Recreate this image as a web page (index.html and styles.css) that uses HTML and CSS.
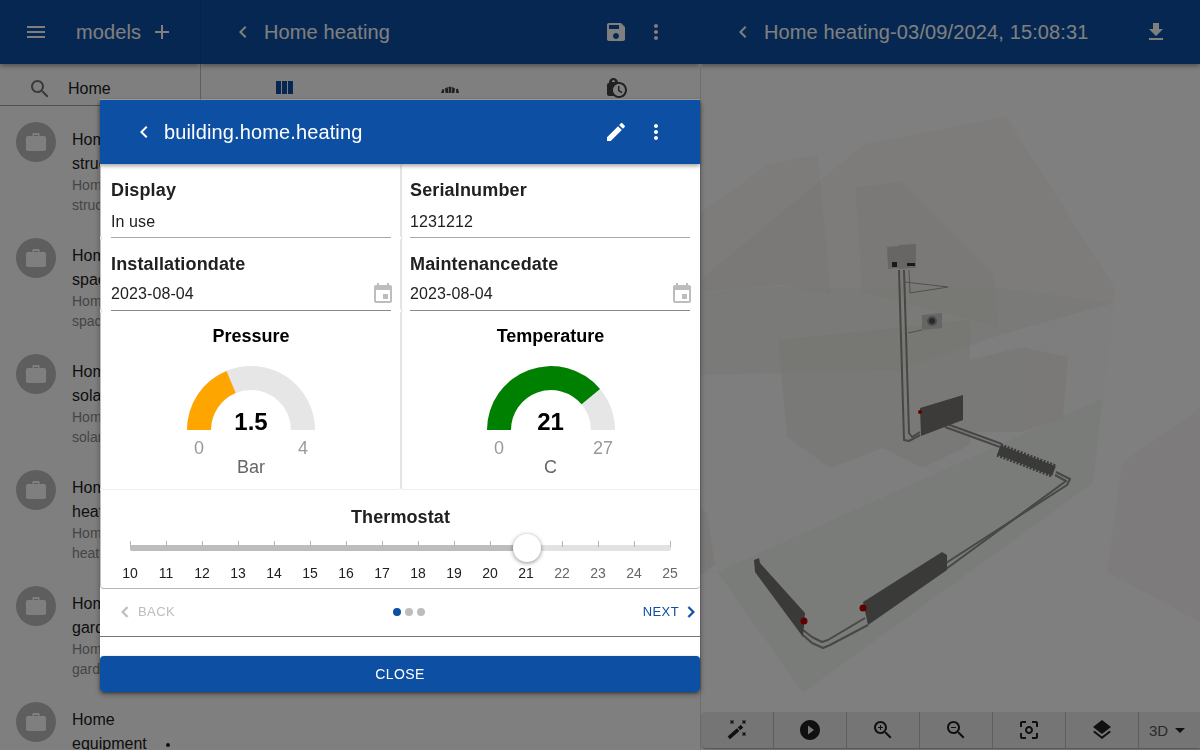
FILE: index.html
```html
<!DOCTYPE html>
<html lang="en">

<head>
    <meta charset="UTF-8">
    <meta name="viewport" content="width=device-width, initial-scale=1.0">
    <title>Home heating</title>
    <link rel="stylesheet" href="styles.css">
</head>

<body>
    <div class="app">
        <!-- models list -->
        <section class="panel panel-left">
            <header class="topbar">
                <svg class="icon" viewBox="0 0 24 24"><path d="M3 18h18v-2H3v2zm0-5h18v-2H3v2zm0-7v2h18V6H3z"/></svg>
                <span class="topbar-title models-title">models</span>
                <svg class="icon" viewBox="0 0 24 24"><path d="M19 13h-6v6h-2v-6H5v-2h6V5h2v6h6v2z"/></svg>
            </header>
            <div class="search">
                <svg class="icon icon-search" viewBox="0 0 24 24"><path d="M15.5 14h-.79l-.28-.27C15.41 12.59 16 11.11 16 9.5 16 5.91 13.09 3 9.5 3S3 5.91 3 9.5 5.91 16 9.5 16c1.61 0 3.09-.59 4.23-1.57l.27.28v.79l5 4.99L20.49 19l-4.99-5zm-6 0C7.01 14 5 11.99 5 9.5S7.01 5 9.5 5 14 7.01 14 9.5 11.99 14 9.5 14z"/></svg>
                <span>Home</span>
            </div>
            <ul class="list">
                <li class="item">
                    <span class="avatar"><svg class="icon" viewBox="0 0 24 24"><path fill-rule="evenodd" d="M4 6h4.500V4c0-.6.4-1 1-1h5c.6 0 1 .4 1 1v2H20c1.100 0 2 .9 2 2v11c0 1.100-.9 2-2 2H4c-1.100 0-2-.9-2-2V8c0-1.100.9-2 2-2zm6 0h4V5h-4z"/></svg></span>
                    <div class="item-text"><div class="item-title">Home structure</div><div class="item-sub">Home structure</div></div>
                </li>
                <li class="item">
                    <span class="avatar"><svg class="icon" viewBox="0 0 24 24"><path fill-rule="evenodd" d="M4 6h4.500V4c0-.6.4-1 1-1h5c.6 0 1 .4 1 1v2H20c1.100 0 2 .9 2 2v11c0 1.100-.9 2-2 2H4c-1.100 0-2-.9-2-2V8c0-1.100.9-2 2-2zm6 0h4V5h-4z"/></svg></span>
                    <div class="item-text"><div class="item-title">Home spaces</div><div class="item-sub">Home spaces</div></div>
                </li>
                <li class="item">
                    <span class="avatar"><svg class="icon" viewBox="0 0 24 24"><path fill-rule="evenodd" d="M4 6h4.500V4c0-.6.4-1 1-1h5c.6 0 1 .4 1 1v2H20c1.100 0 2 .9 2 2v11c0 1.100-.9 2-2 2H4c-1.100 0-2-.9-2-2V8c0-1.100.9-2 2-2zm6 0h4V5h-4z"/></svg></span>
                    <div class="item-text"><div class="item-title">Home solar</div><div class="item-sub">Home solar</div></div>
                </li>
                <li class="item">
                    <span class="avatar"><svg class="icon" viewBox="0 0 24 24"><path fill-rule="evenodd" d="M4 6h4.500V4c0-.6.4-1 1-1h5c.6 0 1 .4 1 1v2H20c1.100 0 2 .9 2 2v11c0 1.100-.9 2-2 2H4c-1.100 0-2-.9-2-2V8c0-1.100.9-2 2-2zm6 0h4V5h-4z"/></svg></span>
                    <div class="item-text"><div class="item-title">Home heating</div><div class="item-sub">Home heating</div></div>
                </li>
                <li class="item">
                    <span class="avatar"><svg class="icon" viewBox="0 0 24 24"><path fill-rule="evenodd" d="M4 6h4.500V4c0-.6.4-1 1-1h5c.6 0 1 .4 1 1v2H20c1.100 0 2 .9 2 2v11c0 1.100-.9 2-2 2H4c-1.100 0-2-.9-2-2V8c0-1.100.9-2 2-2zm6 0h4V5h-4z"/></svg></span>
                    <div class="item-text"><div class="item-title">Home garden</div><div class="item-sub">Home garden</div></div>
                </li>
                <li class="item">
                    <span class="avatar"><svg class="icon" viewBox="0 0 24 24"><path fill-rule="evenodd" d="M4 6h4.500V4c0-.6.4-1 1-1h5c.6 0 1 .4 1 1v2H20c1.100 0 2 .9 2 2v11c0 1.100-.9 2-2 2H4c-1.100 0-2-.9-2-2V8c0-1.100.9-2 2-2zm6 0h4V5h-4z"/></svg></span>
                    <div class="item-text"><div class="item-title">Home equipment</div></div>
                    <span class="item-dot"></span>
                </li>
            </ul>
        </section>

        <!-- model detail -->
        <section class="panel panel-mid">
            <header class="topbar">
                <svg class="icon" viewBox="0 0 24 24"><path d="M15.41 7.41L14 6l-6 6 6 6 1.41-1.41L10.83 12z"/></svg>
                <span class="topbar-title">Home heating</span>
                <span class="spacer"></span>
                <svg class="icon" viewBox="0 0 24 24"><path d="M17 3H5c-1.11 0-2 .9-2 2v14c0 1.100.89 2 2 2h14c1.100 0 2-.9 2-2V7l-4-4zm-5 16c-1.660 0-3-1.340-3-3s1.340-3 3-3 3 1.340 3 3-1.340 3-3 3zm3-10H5V5h10v4z"/></svg>
                <svg class="icon icon-more" viewBox="0 0 24 24"><path d="M12 8c1.100 0 2-.9 2-2s-.9-2-2-2-2 .9-2 2 .9 2 2 2zm0 2c-1.100 0-2 .9-2 2s.9 2 2 2 2-.9 2-2-.9-2-2-2zm0 6c-1.100 0-2 .9-2 2s.9 2 2 2 2-.9 2-2-.9-2-2-2z"/></svg>
            </header>
            <div class="tabs">
                <svg class="icon tab-active" viewBox="0 0 24 24"><path d="M10 18h5V5h-5v13zm-6 0h5V5H4v13zM16 5v13h5V5h-5z"/></svg>
                <svg class="icon tab-icon" viewBox="0 0 24 24"><path d="M3 17l1.500-4 2 .8-.7 3.200zM7 12.500l2.600-1.400 1 5.900H7.600zM10.400 10.700h3.200l-.8 6.300h-1.600zM14.400 11.100l2.600 1.400-.6 4.500h-3zM18 13l2-.2 1 4.200h-2.800z"/></svg>
                <svg class="icon tab-icon" viewBox="0 0 24 24"><path d="M14.500 14.200l2.900 1.700-.8 1.300L13 15v-5h1.500v4.200zM22 14c0 4.410-3.590 8-8 8-2.020 0-3.860-.76-5.270-2H4c-1.150 0-2-.85-2-2V9c0-1.120.89-1.960 2-2v-.5C4 4.010 6.010 2 8.500 2c2.340 0 4.240 1.790 4.460 4.080.34-.05.69-.08 1.040-.08 4.410 0 8 3.590 8 8zM7 6h3v-.5C10 4.740 9.250 4 8.500 4 7.750 4 7 4.740 7 5.500V6zm13 8c0-3.310-2.690-6-6-6s-6 2.690-6 6 2.690 6 6 6 6-2.690 6-6z"/></svg>
            </div>
        </section>

        <!-- 3D viewer -->
        <section class="panel panel-right">
            <header class="topbar">
                <svg class="icon" viewBox="0 0 24 24"><path d="M15.41 7.41L14 6l-6 6 6 6 1.41-1.41L10.83 12z"/></svg>
                <span class="topbar-title">Home heating-03/09/2024, 15:08:31</span>
                <span class="spacer"></span>
                <svg class="icon" viewBox="0 0 24 24"><path d="M19 9h-4V3H9v6H5l7 7 7-7zM5 18v2h14v-2H5z"/></svg>
            </header>
            <div class="viewer">
                <svg class="scene" viewBox="700 64 500 686">
                    <g class="walls">
                        <polygon points="700,213 768,164 783,285 700,292"/>
                        <polygon points="768,164 818,154 831,295 783,285"/>
                        <polygon points="700,280 864,144 1006,116 1116,290 1113,303 1000,335 900,370 700,375"/>
                        <polygon points="855,187 901,182 994,275 998,327 862,292"/>
                    </g>
                    <g class="floor">
                        <polygon class="floor-back" points="700,293 767,287 993,287 1115,303 1103,398 717,572 700,575"/>
                        <polygon points="717,572 1103,398 1093,483 803,693"/>
                    </g>
                    <g class="boxes">
                        <polygon points="778,340 970,320 970,445 923,468 883,448 830,468 787,437"/>
                        <polygon points="970,360 1022,347 1022,432 970,432"/>
                    </g>
                    <g class="pink">
                        <polygon points="1022,347 1068,357 1063,418 1022,432"/>
                        <polygon points="1200,408 1122,463 1107,572 1200,622"/>
                        <polygon points="700,508 707,512 715,565 700,575"/>
                    </g>
                    <g class="pipes">
                        <polyline points="899,270 904,440 909,441 920,435"/>
                        <polyline points="904,270 909,433 912,437 920,432"/>
                        <polyline class="pipe-thin" points="909,270 910,293 948,287 905,282"/>
                        <polyline class="pipe-thin" points="908,333 922,330"/>
                        <polyline points="945,427 1000,447"/>
                        <polyline points="947,424 1002,444"/>
                        <polyline points="1056,472 1070,479 1067,485 946,563"/>
                        <polyline points="1055,475 1066,481 946,569"/>
                        <polyline points="803,630 812,637 822,642 828,640 865,618"/>
                        <polyline points="803,635 812,643 823,648 830,645 868,625"/>
                    </g>
                    <polygon class="unit" points="887,247 899,246 899,268 888,269"/>
                    <polygon class="unit" points="899,245 916,244 916,268 899,269"/>
                    <rect class="unit-dark" x="907" y="263" width="8" height="3"/>
                    <rect class="unit-dark" x="892" y="262" width="5" height="5"/>
                    <polygon class="unit" points="922,315 942,313 942,328 922,330"/>
                    <circle class="fan" cx="932" cy="321" r="4"/>
                    <polygon class="radiator-light" points="920,408 963,395 963,420 921,436"/>
                    <polygon class="radiator" points="754,560 759,558 760,563 805,613 803,637 755,572"/>
                    <polygon class="radiator" points="863,602 942,552 947,555 947,570 868,625"/>
                    <line class="rib-core" x1="999" y1="450" x2="1054" y2="471"/>
                    <line class="rib" x1="999" y1="450" x2="1054" y2="471"/>
                    <circle class="valve" cx="920" cy="412" r="2"/>
                    <circle class="valve" cx="863" cy="608" r="3.5"/>
                    <circle class="valve" cx="804" cy="621" r="3.5"/>
                </svg>

                <div class="toolbar">
                    <button class="tool">
                        <svg class="icon" viewBox="0 0 24 24">
                            <path d="M1.600 18.600l9.400-8.400 2.400 2.700-9.400 8.400zM11.800 9.500l3-2.700 2.400 2.700-3 2.700z"/>
                            <path class="sparks" d="M4.500 2.500l3 3M7.500 2.500l-3 3M16.500 2.500l3 3M19.500 2.500l-3 3M16.500 14.500l3 3M19.500 14.500l-3 3"/>
                        </svg>
                    </button>
                    <button class="tool"><svg class="icon" viewBox="0 0 24 24"><path d="M12 2C6.480 2 2 6.480 2 12s4.480 10 10 10 10-4.480 10-10S17.520 2 12 2zm-2 14.500v-9l6 4.500-6 4.500z"/></svg></button>
                    <button class="tool"><svg class="icon" viewBox="0 0 24 24"><path d="M15.500 14h-.79l-.28-.27C15.410 12.590 16 11.110 16 9.500 16 5.910 13.090 3 9.500 3S3 5.910 3 9.500 5.910 16 9.500 16c1.610 0 3.090-.59 4.230-1.570l.27.28v.79l5 4.990L20.490 19l-4.990-5zm-6 0C7.010 14 5 11.990 5 9.500S7.010 5 9.500 5 14 7.010 14 9.500 11.990 14 9.500 14zM12 10h-2v2H9v-2H7V9h2V7h1v2h2v1z"/></svg></button>
                    <button class="tool"><svg class="icon" viewBox="0 0 24 24"><path d="M15.500 14h-.79l-.28-.27C15.410 12.590 16 11.110 16 9.500 16 5.910 13.090 3 9.500 3S3 5.910 3 9.500 5.910 16 9.500 16c1.610 0 3.090-.59 4.230-1.570l.27.28v.79l5 4.990L20.490 19l-4.990-5zm-6 0C7.010 14 5 11.990 5 9.500S7.010 5 9.500 5 14 7.010 14 9.500 11.990 14 9.500 14zM7 9h5v1H7z"/></svg></button>
                    <button class="tool"><svg class="icon" viewBox="0 0 24 24"><path d="M5 15H3v4c0 1.100.9 2 2 2h4v-2H5v-4zM5 5h4V3H5c-1.100 0-2 .9-2 2v4h2V5zm14-2h-4v2h4v4h2V5c0-1.100-.9-2-2-2zm0 16h-4v2h4c1.100 0 2-.9 2-2v-4h-2v4zM12 8c-2.210 0-4 1.790-4 4s1.790 4 4 4 4-1.790 4-4-1.790-4-4-4zm0 6c-1.100 0-2-.9-2-2s.9-2 2-2 2 .9 2 2-.9 2-2 2z"/></svg></button>
                    <button class="tool"><svg class="icon" viewBox="0 0 24 24"><path d="M11.990 18.540l-7.370-5.730L3 14.070l9 7 9-7-1.630-1.270-7.380 5.740zM12 16l7.360-5.730L21 9l-9-7-9 7 1.630 1.270L12 16z"/></svg></button>
                    <button class="tool tool-mode">3D<span class="caret"></span></button>
                </div>
            </div>
        </section>
    </div>

    <div class="backdrop"></div>

    <div class="dialog">
        <header class="dialog-head">
            <svg class="icon" viewBox="0 0 24 24"><path d="M15.41 7.41L14 6l-6 6 6 6 1.41-1.41L10.83 12z"/></svg>
            <span class="topbar-title">building.home.heating</span>
            <span class="spacer"></span>
            <svg class="icon" viewBox="0 0 24 24"><path d="M3 17.250V21h3.750L17.810 9.940l-3.750-3.750L3 17.250zM20.710 7.040c.39-.39.39-1.020 0-1.410l-2.340-2.340c-.39-.39-1.020-.39-1.410 0l-1.830 1.830 3.750 3.750 1.830-1.830z"/></svg>
            <svg class="icon icon-more" viewBox="0 0 24 24"><path d="M12 8c1.100 0 2-.9 2-2s-.9-2-2-2-2 .9-2 2 .9 2 2 2zm0 2c-1.100 0-2 .9-2 2s.9 2 2 2 2-.9 2-2-.9-2-2-2zm0 6c-1.100 0-2 .9-2 2s.9 2 2 2 2-.9 2-2-.9-2-2-2z"/></svg>
        </header>

        <div class="fields">
            <div class="field">
                <div class="field-label">Display</div>
                <div class="field-value">In use</div>
            </div>
            <div class="field">
                <div class="field-label">Serialnumber</div>
                <div class="field-value">1231212</div>
            </div>
            <div class="field field-date">
                <div class="field-label">Installationdate</div>
                <div class="field-value">2023-08-04
                    <svg class="icon icon-date" viewBox="0 0 24 24"><path d="M17 12h-5v5h5v-5zM16 1v2H8V1H6v2H5c-1.110 0-1.990.9-1.990 2L3 19c0 1.100.89 2 2 2h14c1.100 0 2-.9 2-2V5c0-1.100-.9-2-2-2h-1V1h-2zm3 18H5V8h14v11z"/></svg>
                </div>
            </div>
            <div class="field field-date">
                <div class="field-label">Maintenancedate</div>
                <div class="field-value">2023-08-04
                    <svg class="icon icon-date" viewBox="0 0 24 24"><path d="M17 12h-5v5h5v-5zM16 1v2H8V1H6v2H5c-1.110 0-1.990.9-1.990 2L3 19c0 1.100.89 2 2 2h14c1.100 0 2-.9 2-2V5c0-1.100-.9-2-2-2h-1V1h-2zm3 18H5V8h14v11z"/></svg>
                </div>
            </div>

            <div class="gauge">
                <div class="gauge-title">Pressure</div>
                <svg class="gauge-svg" viewBox="0 0 200 102">
                    <path class="gauge-bg" d="M36 70a64 64 0 0 1 128 0h-24a40 40 0 0 0-80 0z"/>
                    <path class="gauge-pressure" d="M36 70A64 64 0 0 1 75.500 10.900L84.700 33A40 40 0 0 0 60 70z"/>
                    <text class="gauge-value" x="100" y="70">1.5</text>
                    <text class="gauge-limit" x="48" y="94">0</text>
                    <text class="gauge-limit" x="152" y="94">4</text>
                </svg>
                <div class="gauge-unit">Bar</div>
            </div>
            <div class="gauge">
                <div class="gauge-title">Temperature</div>
                <svg class="gauge-svg" viewBox="0 0 200 102">
                    <path class="gauge-bg" d="M36 70a64 64 0 0 1 128 0h-24a40 40 0 0 0-80 0z"/>
                    <path class="gauge-temp" d="M36 70A64 64 0 0 1 149 28.900L130.600 44.300A40 40 0 0 0 60 70z"/>
                    <text class="gauge-value" x="99.5" y="70">21</text>
                    <text class="gauge-limit" x="48" y="94">0</text>
                    <text class="gauge-limit" x="152" y="94">27</text>
                </svg>
                <div class="gauge-unit">C</div>
            </div>
        </div>

        <div class="thermostat">
            <div class="thermostat-title">Thermostat</div>
            <div class="slider">
                <div class="ticks">
                    <i></i><i></i><i></i><i></i><i></i><i></i><i></i><i></i><i></i><i></i><i></i><i></i><i></i><i></i><i></i><i></i>
                </div>
                <div class="track"><div class="track-fill" style="width: 73.33%"></div></div>
                <div class="thumb" style="left: 73.33%"></div>
            </div>
            <div class="scale">
                <span>10</span><span>11</span><span>12</span><span>13</span><span>14</span><span>15</span><span>16</span><span>17</span>
                <span>18</span><span>19</span><span>20</span><span>21</span><span class="off">22</span><span class="off">23</span><span class="off">24</span><span class="off">25</span>
            </div>
        </div>

        <div class="stepper">
            <span class="step-btn step-back">
                <svg class="icon" viewBox="0 0 24 24"><path d="M15.41 7.41L14 6l-6 6 6 6 1.41-1.41L10.83 12z"/></svg>BACK
            </span>
            <span class="dots"><i class="dot-on"></i><i></i><i></i></span>
            <span class="step-btn step-next">NEXT
                <svg class="icon" viewBox="0 0 24 24"><path d="M8.590 16.590L10 18l6-6-6-6-1.410 1.410L13.170 12z"/></svg>
            </span>
        </div>

        <button class="close-btn">CLOSE</button>
    </div>
</body>

</html>
```

FILE: styles.css
```css
* {
    box-sizing: border-box;
}

body {
    margin: 0;
    height: 750px;
    overflow: hidden;
    background: #fff;
    color: #212121;
    font-family: "Liberation Sans", Arial, sans-serif;
}

.icon {
    flex: none;
    display: block;
    width: 24px;
    height: 24px;
    fill: currentColor;
}

.spacer {
    flex: 1;
}

.app {
    display: grid;
    grid-template-columns: 200px 500px 500px;
    height: 750px;
}

.panel {
    display: flex;
    flex-direction: column;
    min-width: 0;
    height: 750px;
    overflow: hidden;
}

.topbar {
    flex: none;
    display: flex;
    align-items: center;
    height: 64px;
    padding: 0 32px 0 31px;
    background: #0d4fa3;
    color: #fff;
    box-shadow: 0 2px 5px rgba(0, 0, 0, .4);
    position: relative;
}

.panel-mid .topbar {
    border-left: 1px solid rgba(0, 0, 0, .12);
    padding-left: 30px;
}

.topbar-title {
    margin-left: 9px;
    font-size: 20px;
    letter-spacing: .13px;
    white-space: nowrap;
}

.panel-left .topbar {
    padding: 0 0 0 24px;
}

.models-title {
    margin: 0 9px 0 28px;
}

.icon-more {
    margin-left: 16px;
}

/* search + list */
.search {
    flex: none;
    display: flex;
    align-items: center;
    gap: 16px;
    height: 42px;
    padding: 8px 0 0 28px;
    border-bottom: 1px solid #9e9e9e;
    font-size: 16px;
}

.icon-search {
    color: #757575;
}

.list {
    margin: 0;
    padding: 16px 0 0 16px;
    list-style: none;
}

.item {
    display: flex;
    height: 116px;
    position: relative;
}

.avatar {
    flex: none;
    display: flex;
    align-items: center;
    justify-content: center;
    width: 40px;
    height: 40px;
    border-radius: 50%;
    background: #bdbdbd;
    color: #fff;
}

.item-text {
    width: 76px;
    margin: 6px 0 0 16px;
}

.item-title {
    font-size: 16px;
    line-height: 24px;
}

.item-sub {
    width: 60px;
    margin-top: -1px;
    font-size: 14px;
    line-height: 20px;
    color: #8a8a8a;
}

.item-dot {
    position: absolute;
    left: 150px;
    top: 41px;
    width: 4px;
    height: 4px;
    border-radius: 50%;
    background: #212121;
}

/* tabs under the model header */
.tabs {
    display: grid;
    grid-template-columns: repeat(3, 1fr);
    justify-items: center;
    height: 41px;
    padding-top: 12px;
    border-left: 1px solid #bdbdbd;
    color: #424242;
}

.tab-active {
    color: #0d4fa3;
}

/* 3d viewer */
.viewer {
    flex: 1;
    position: relative;
    border-left: 1px solid #dcdcdc;
}

.scene {
    position: absolute;
    left: -1px;
    top: 0;
    width: 500px;
    height: 686px;
}

.walls polygon {
    fill: #b5ad8c;
    opacity: .07;
}

.floor polygon {
    fill: #9dbb9f;
    opacity: .1;
}

.floor .floor-back {
    opacity: .05;
}

.boxes polygon {
    fill: #a8997a;
    opacity: .08;
}

.pink polygon {
    fill: #c99a9a;
    opacity: .09;
}

.pipes polyline {
    fill: none;
    stroke: #8e8e88;
    stroke-width: 2;
    stroke-linejoin: round;
}

.pipes .pipe-thin {
    stroke: #a3a098;
    stroke-width: 1;
}

.unit {
    fill: #cfcdcb;
}

.unit-dark {
    fill: #333;
}

.fan {
    fill: #555;
    stroke: #999;
    stroke-width: 2;
}

.radiator-light {
    fill: #7a7772;
}

.radiator {
    fill: #747672;
}

.rib-core {
    stroke: #747672;
    stroke-width: 10;
}

.rib {
    stroke: #747672;
    stroke-width: 14;
    stroke-dasharray: 2 1.5;
}

.valve {
    fill: #c20000;
}

.toolbar {
    position: absolute;
    left: 1px;
    bottom: 2px;
    right: 0;
    display: flex;
    height: 36px;
    border-radius: 4px 0 0 4px;
    background: #ebebeb;
    box-shadow: 0 1px 2px rgba(0, 0, 0, .4);
}

.tool {
    display: flex;
    align-items: center;
    justify-content: center;
    width: 73px;
    padding: 0;
    border: 0;
    border-right: 1px solid #bdbdbd;
    background: none;
    color: #212121;
    font: 15px "Liberation Sans", Arial, sans-serif;
}

.tool:first-child {
    width: 72px;
}

.tool-mode {
    flex: 1;
    justify-content: flex-start;
    gap: 7px;
    padding-left: 10px;
    border-right: 0;
    color: #555;
}

.sparks {
    fill: none;
    stroke: currentColor;
    stroke-width: 1.2;
}

.caret {
    width: 0;
    height: 0;
    border-left: 5px solid transparent;
    border-right: 5px solid transparent;
    border-top: 5px solid #212121;
}

.backdrop {
    position: fixed;
    top: 0;
    right: 0;
    bottom: 0;
    left: 0;
    background: rgba(0, 0, 0, .5);
}

/* dialog */
.dialog {
    position: fixed;
    left: 100px;
    top: 100px;
    display: flex;
    flex-direction: column;
    width: 600px;
    height: 592px;
    border-radius: 0 0 4px 4px;
    background: #fff;
    box-shadow: 0 -1px 0 rgba(255, 255, 255, .3), 0 2px 6px rgba(0, 0, 0, .35);
}

.dialog-head {
    flex: none;
    display: flex;
    align-items: center;
    height: 64px;
    padding: 0 32px;
    background: #0d4fa3;
    color: #fff;
    box-shadow: 0 2px 4px rgba(0, 0, 0, .35);
    position: relative;
}

.dialog-head .topbar-title {
    margin-left: 8px;
}

.fields {
    display: grid;
    grid-template-columns: 300px 300px;
    grid-template-rows: 74px 73px 179px;
}

.field,
.gauge {
    border-left: 2px solid #e4e4e4;
    border-radius: 3px;
}

.fields > :nth-child(odd) {
    border-left: 1px solid #bdbdbd;
}

.field {
    padding: 14px 10px 0 8px;
}

.fields > .field:nth-child(odd) {
    padding: 14px 9px 0 10px;
}

.field-label {
    font-size: 18px;
    font-weight: bold;
    letter-spacing: .15px;
    line-height: 24px;
}

.field-value {
    position: relative;
    height: 28px;
    margin-top: 8px;
    border-bottom: 1px solid #a8a8a8;
    font-size: 16px;
    letter-spacing: .1px;
    line-height: 24px;
}

.field-date .field-value {
    height: 29px;
    margin-top: 6px;
    border-bottom-color: #8a8a8a;
}

.icon-date {
    position: absolute;
    right: -4px;
    top: 0;
    color: #bdbdbd;
}

.gauge {
    padding: 13px 1px 0 0;
    border-bottom: 1px solid #eee;
    text-align: center;
}

.fields > .gauge:nth-child(odd) {
    padding: 13px 0 0 1px;
}

.gauge-title {
    font-size: 18px;
    font-weight: bold;
    line-height: 24px;
    color: #000;
}

.gauge-svg {
    display: block;
    width: 200px;
    height: 102px;
    margin: 12px auto -6px;
}

.gauge-bg {
    fill: #e6e6e6;
}

.gauge-pressure {
    fill: #ffa500;
}

.gauge-temp {
    fill: #008000;
}

.gauge-value {
    font: bold 24px "Liberation Sans", Arial, sans-serif;
    text-anchor: middle;
}

.gauge-limit {
    font-size: 18px;
    text-anchor: middle;
    fill: #999;
}

.gauge-unit {
    font-size: 18px;
    line-height: 22px;
    color: #666;
}

.thermostat {
    flex: none;
    height: 99px;
    padding-top: 15px;
    border-left: 1px solid #bdbdbd;
    border-bottom: 1px solid #b5b5b5;
    border-radius: 0 0 4px 4px;
    text-align: center;
}

.thermostat-title {
    font-size: 18px;
    font-weight: bold;
    letter-spacing: .1px;
    line-height: 24px;
}

.slider {
    position: relative;
    height: 20px;
    margin: 12px 29px 0 29px;
}

.ticks {
    display: flex;
    justify-content: space-between;
    height: 6px;
}

.ticks i {
    width: 1px;
    background: #b5b5b5;
}

.track {
    height: 6px;
    margin-top: -2px;
    border-radius: 2px;
    background: #e2e2e2;
}

.track-fill {
    height: 100%;
    border-radius: 2px;
    background: #bdbdbd;
}

.thumb {
    position: absolute;
    top: -7px;
    width: 28px;
    height: 28px;
    margin-left: -14px;
    border-radius: 50%;
    background: #fff;
    box-shadow: 0 1px 4px rgba(0, 0, 0, .45);
}

.scale {
    display: flex;
    margin-top: 3px;
    padding: 0 11px;
    font-size: 14px;
    line-height: 18px;
}

.scale span {
    width: 36px;
    text-align: center;
}

.scale .off {
    color: #666;
}

.stepper {
    flex: none;
    display: grid;
    grid-template-columns: 1fr auto 1fr;
    align-items: center;
    height: 48px;
    padding-bottom: 3px;
    border-bottom: 1px solid #777;
    font-size: 13px;
    letter-spacing: .4px;
}

.step-btn {
    display: flex;
    align-items: center;
}

.step-btn .icon {
    width: 22px;
    height: 22px;
    margin-top: 2px;
    stroke: currentColor;
    stroke-width: .5;
}

.step-back {
    gap: 2px;
    margin-left: 14px;
    color: #bdbdbd;
}

.step-next {
    justify-content: flex-end;
    gap: 1px;
    margin-right: -2px;
    color: #0d4fa3;
}

.dots {
    display: flex;
    gap: 4px;
    margin: 2px 0 0 18px;
}

.dots i {
    width: 8px;
    height: 8px;
    border-radius: 50%;
    background: #bdbdbd;
}

.dots .dot-on {
    background: #0d4fa3;
}

.close-btn {
    flex: none;
    height: 36px;
    margin-top: 19px;
    border: 0;
    border-radius: 4px;
    background: #0d4fa3;
    color: #fff;
    font: 14px "Liberation Sans", Arial, sans-serif;
    letter-spacing: .4px;
    box-shadow: 0 1px 3px rgba(0, 0, 0, .4);
}
```
